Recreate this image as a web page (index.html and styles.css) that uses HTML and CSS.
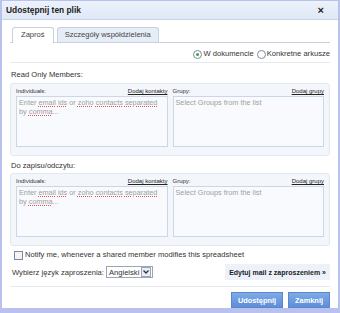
FILE: index.html
```html
<!DOCTYPE html>
<html lang="pl">
<head>
    <meta charset="UTF-8">
    <title>Udostępnij ten plik</title>
    <link rel="stylesheet" href="styles.css">
</head>
<body>
    <div class="dialog">
        <div class="titlebar">
            <span class="title">Udostępnij ten plik</span>
            <span class="close">×</span>
        </div>
        <div class="content">
            <div class="tabs">
                <div class="tab active">Zaproś</div>
                <div class="tab">Szczegóły współdzielenia</div>
            </div>
            <div class="scope">
                <label><span class="radio checked"></span>W dokumencie</label>
                <label><span class="radio"></span>Konkretne arkusze</label>
            </div>
            <p class="section-title">Read Only Members:</p>
            <div class="members">
                <div class="col">
                    <div class="col-head"><span>Individuals:</span><a href="#">Dodaj kontakty</a></div>
                    <div class="field placeholder">Enter <u>email</u> <u>ids</u> or <u>zoho</u> <u>contacts</u> <u>separated</u> by <u>comma</u>...</div>
                </div>
                <div class="col">
                    <div class="col-head"><span>Grupy:</span><a href="#">Dodaj grupy</a></div>
                    <div class="field placeholder">Select Groups from the list</div>
                </div>
            </div>
            <p class="section-title second">Do zapisu/odczytu:</p>
            <div class="members">
                <div class="col">
                    <div class="col-head"><span>Individuals:</span><a href="#">Dodaj kontakty</a></div>
                    <div class="field placeholder">Enter <u>email</u> <u>ids</u> or <u>zoho</u> <u>contacts</u> <u>separated</u> by <u>comma</u>...</div>
                </div>
                <div class="col">
                    <div class="col-head"><span>Grupy:</span><a href="#">Dodaj grupy</a></div>
                    <div class="field placeholder">Select Groups from the list</div>
                </div>
            </div>
            <label class="notify"><span class="checkbox"></span>Notify me, whenever a shared member modifies this spreadsheet</label>
            <div class="lang-row">
                <div class="lang">
                    Wybierz język zaproszenia:
                    <span class="select">Angielski<span class="arrow"><svg width="6" height="4" viewBox="0 0 6 4"><path d="M0.5 0.5 L3 3 L5.5 0.5" fill="none" stroke="#333" stroke-width="1.3"/></svg></span></span>
                </div>
                <button class="edit-mail">Edytuj mail z zaproszeniem »</button>
            </div>
            <div class="actions">
                <button class="primary">Udostępnij</button>
                <button class="primary">Zamknij</button>
            </div>
        </div>
    </div>
</body>
</html>
```

FILE: styles.css
```css
body {
    margin: 0;
    background: #b9c2ee;
    font-family: "Liberation Sans", Arial, sans-serif;
    font-size: 7.6px;
    color: #333;
}
.dialog {
    width: 336px;
    height: 307px;
    margin: 1px 2px 0 2px;
    background: white;
    display: flex;
    flex-direction: column;
}
.titlebar {
    height: 19px;
    background: linear-gradient(#edf2fb, #dfe8f7);
    border-bottom: 1px solid #c9d4e8;
    display: flex;
    align-items: center;
    justify-content: space-between;
    padding: 0 14px 0 4px;
}
.title {
    font-weight: bold;
    font-size: 8.4px;
    color: #222;
}
.close {
    font-weight: bold;
    font-size: 11px;
    color: #222;
}
.content {
    padding: 7px 8px 0 8px;
}
.tabs {
    display: flex;
    gap: 3px;
    padding-left: 2px;
    border-bottom: 1px solid #c7d1e0;
    height: 15px;
}
.tab {
    border: 1px solid #c7d1e0;
    border-bottom: none;
    border-radius: 3px 3px 0 0;
    background: #e6edf7;
    padding: 0 7px;
    line-height: 14px;
    color: #444;
}
.tab.active {
    background: white;
    height: 15px;
    padding: 0 8px;
}
.scope {
    display: flex;
    justify-content: flex-end;
    gap: 3px;
    padding: 6px 0 3px;
    border-bottom: 1px solid #e4e8ef;
    line-height: 10px;
}
.scope label {
    display: flex;
    align-items: center;
    gap: 1px;
}
.radio {
    width: 7px;
    height: 7px;
    border: 1px solid #7a8aa0;
    border-radius: 50%;
    background: white;
    display: inline-flex;
    align-items: center;
    justify-content: center;
}
.radio.checked::after {
    content: "";
    width: 3px;
    height: 3px;
    border-radius: 50%;
    background: #3aa43a;
}
.section-title {
    margin: 7px 0 4px 1px;
    line-height: 9px;
}
.section-title.second {
    margin: 5px 0 3px 1px;
}
.members {
    display: flex;
    gap: 5px;
    background: #f3f6fb;
    border: 1px solid #e2e8f1;
    border-radius: 3px;
    padding: 4px 5px 8px 5px;
}
.col {
    flex: 1;
}
.col-head {
    display: flex;
    justify-content: space-between;
    font-size: 6px;
    line-height: 7px;
    margin-bottom: 1px;
}
.col-head a {
    color: #222;
}
.field {
    height: 47px;
    border: 1px solid #cbd6e6;
    background: #f8fafd;
    padding: 1px 2px;
    font-size: 7.3px;
    line-height: 9px;
    color: #a0a0a0;
}
.field u {
    text-decoration: underline dotted #d55;
}
.notify {
    display: flex;
    align-items: center;
    gap: 2px;
    margin: 4px 0 0 4px;
    line-height: 10px;
}
.checkbox {
    width: 7px;
    height: 7px;
    border: 1px solid #7a8aa0;
    background: #f4f4f4;
}
.lang-row {
    display: flex;
    justify-content: space-between;
    align-items: center;
    margin-top: 4px;
    padding-bottom: 6px;
    border-bottom: 1px solid #e4e8ef;
}
.lang {
    display: flex;
    align-items: center;
    gap: 2px;
    padding-left: 2px;
}
.select {
    display: inline-flex;
    align-items: center;
    border: 1px solid #9aa6b8;
    padding-left: 2px;
    height: 10px;
    gap: 2px;
}
.arrow {
    display: inline-flex;
    align-items: center;
    justify-content: center;
    width: 8px;
    height: 8px;
    border: 1px solid #9aa6b8;
    background: #e9eef6;
    margin-right: 1px;
}
.edit-mail {
    font-family: inherit;
    font-weight: bold;
    font-size: 7px;
    background: #edf2fa;
    border: none;
    color: #222;
    height: 16px;
    padding: 0 4px;
}
.actions {
    display: flex;
    justify-content: flex-end;
    gap: 5px;
    padding-top: 5px;
}
.primary {
    font-family: inherit;
    font-weight: bold;
    font-size: 7.4px;
    color: white;
    background: linear-gradient(#7eaae8, #5f8ed8);
    border: 1px solid #5a86cc;
    height: 16px;
    padding: 0 6px;
}
```
